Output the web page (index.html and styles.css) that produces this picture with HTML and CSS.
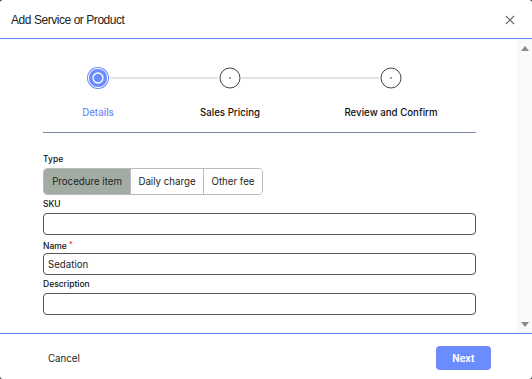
FILE: index.html
```html
<!DOCTYPE html>
<html lang="en">

<head>
     <meta charset="UTF-8">
     <title>Add Service or Product</title>
     <meta name="viewport" content="width=device-width, initial-scale=1.0">
     <link rel="stylesheet" href="styles.css">
</head>

<body>

     <div class="dialog">
          <header class="dialog-header">
               <h1>Add Service or Product</h1>
               <button class="close" aria-label="Close">
                    <svg width="10" height="10" viewBox="0 0 10 10">
                         <path d="M1 1L9 9M9 1L1 9" stroke="#666" stroke-width="1.2" fill="none" />
                    </svg>
               </button>
          </header>

          <div class="dialog-body">
               <div class="body-content">
                    <div class="stepper">
                         <div class="step active">
                              <svg class="dot" width="24" height="24" viewBox="0 0 24 24">
                                   <circle cx="12" cy="12" r="11" fill="#6b8cff" />
                                   <circle cx="12" cy="12" r="9.6" fill="none" stroke="#fff" stroke-width="1" />
                                   <circle cx="12" cy="12" r="5" fill="none" stroke="#fff" stroke-width="1.3" />
                              </svg>
                              <span class="step-label">Details</span>
                         </div>
                         <div class="step-line"></div>
                         <div class="step">
                              <svg class="dot" width="24" height="24" viewBox="0 0 24 24">
                                   <circle cx="12" cy="12" r="10" fill="#fff" stroke="#444" stroke-width="1" />
                                   <circle cx="12" cy="12" r="0.8" fill="#333" />
                              </svg>
                              <span class="step-label">Sales Pricing</span>
                         </div>
                         <div class="step-line long"></div>
                         <div class="step">
                              <svg class="dot" width="24" height="24" viewBox="0 0 24 24">
                                   <circle cx="12" cy="12" r="10" fill="#fff" stroke="#444" stroke-width="1" />
                                   <circle cx="12" cy="12" r="0.8" fill="#333" />
                              </svg>
                              <span class="step-label">Review and Confirm</span>
                         </div>
                    </div>

                    <hr class="divider">

                    <form class="form">
                         <label class="field-label">Type</label>
                         <div class="segmented">
                              <button type="button" class="seg selected">Procedure item</button>
                              <button type="button" class="seg daily">Daily charge</button>
                              <button type="button" class="seg other">Other fee</button>
                         </div>

                         <label class="field-label">SKU</label>
                         <input type="text" class="input">

                         <label class="field-label">Name<span class="req">*</span></label>
                         <input type="text" class="input" value="Sedation">

                         <label class="field-label">Description</label>
                         <input type="text" class="input">
                    </form>
               </div>

               <!-- scrollbar drawn by hand, the browser hides its own -->
               <div class="scrollbar">
                    <span class="arrow up"></span>
                    <span class="arrow down"></span>
               </div>
          </div>

          <footer class="dialog-footer">
               <button class="btn-cancel">Cancel</button>
               <button class="btn-next">Next</button>
          </footer>
     </div>

</body>

</html>
```

FILE: styles.css
```css
:root {
     --blue: #6b8cff;
     --line: #5b86f0;
     --text: #222;
     --border: #555;
}

* {
     box-sizing: border-box;
     margin: 0;
     padding: 0;
}

html,
body {
     height: 100%;
}

body {
     font-family: Inter, 'Noto Sans', sans-serif;
     background: #333;
     color: var(--text);
}

.dialog {
     height: 100%;
     background: white;
     border-radius: 3px;
     display: flex;
     flex-direction: column;
     overflow: hidden;
}

.dialog-header {
     height: 39px;
     flex: none;
     display: flex;
     align-items: center;
     justify-content: space-between;
     padding: 2px 17px 0 11px;
     border-bottom: 1px solid var(--line);
}

.dialog-header h1 {
     font-family: 'Liberation Sans', Arial, sans-serif;
     font-size: 12px;
     font-weight: 400;
     letter-spacing: -0.45px;
     color: #222;
}

.close {
     background: none;
     border: none;
     display: flex;
     cursor: pointer;
}

.dialog-body {
     flex: 1;
     display: flex;
     min-height: 0;
}

.body-content {
     flex: 1;
     overflow: hidden;
     padding: 27px 41px 0 43px;
}

.scrollbar {
     width: 15px;
     flex: none;
     background: #f9f9f9;
     display: flex;
     flex-direction: column;
     justify-content: space-between;
     align-items: center;
     padding: 7px 0 6px;
}

.arrow {
     width: 0;
     height: 0;
     border-left: 4.5px solid transparent;
     border-right: 4.5px solid transparent;
}

.arrow.up {
     border-bottom: 5px solid #8a8a8a;
}

.arrow.down {
     border-top: 5px solid #8a8a8a;
}

.stepper {
     display: flex;
     align-items: flex-start;
     padding-left: 43px;
}

.step {
     position: relative;
     width: 24px;
     height: 24px;
     flex: none;
}

.dot {
     display: block;
}

.step-label {
     position: absolute;
     top: 41px;
     left: 50%;
     transform: translateX(-50%);
     white-space: nowrap;
     font-size: 9.7px;
     font-weight: 500;
     color: #111;
}

.step.active .step-label {
     color: var(--blue);
}

.step-line {
     width: 108px;
     height: 2px;
     background: #e2e2e2;
     margin-top: 11px;
}

.step-line.long {
     width: 137px;
}

.divider {
     border: none;
     border-top: 1px solid #7d8aa3;
     margin-top: 42px;
}

.form {
     display: flex;
     flex-direction: column;
     padding-top: 22px;
     padding-bottom: 20px;
}

.field-label {
     font-size: 8.5px;
     font-weight: 500;
     color: #111;
     height: 9px;
     line-height: 9px;
     margin-bottom: 4px;
}

.req {
     color: #e33;
     font-size: 8px;
     vertical-align: 2px;
     margin-left: 2px;
}

.segmented {
     display: flex;
     align-self: flex-start;
     border: 1px solid #bbb;
     border-radius: 4px;
     overflow: hidden;
     margin-bottom: 5px;
}

.seg {
     font-family: inherit;
     font-size: 9.7px;
     color: #222;
     background: white;
     border: none;
     border-left: 1px solid #bbb;
     height: 25px;
     white-space: nowrap;
     padding: 0;
}

.seg:first-child {
     border-left: none;
}

.seg.selected {
     background: #a3aca3;
     width: 86px;
}

.seg.daily {
     width: 73px;
}

.seg.other {
     width: 59px;
}

.input {
     font-family: inherit;
     font-size: 9.7px;
     color: #222;
     height: 22px;
     border: 1px solid var(--border);
     border-radius: 4px;
     padding: 0 4px;
     margin-bottom: 5px;
     outline: none;
}

.dialog-footer {
     height: 46px;
     flex: none;
     border-top: 1px solid var(--line);
     display: flex;
     align-items: center;
     justify-content: space-between;
     padding: 3px 41px 0 48px;
}

.btn-cancel {
     font-family: inherit;
     font-size: 9.7px;
     color: #222;
     background: none;
     border: none;
}

.btn-next {
     font-family: inherit;
     font-size: 9.7px;
     font-weight: 700;
     color: white;
     background: var(--blue);
     border: none;
     border-radius: 4px;
     width: 55px;
     height: 24px;
}
```
